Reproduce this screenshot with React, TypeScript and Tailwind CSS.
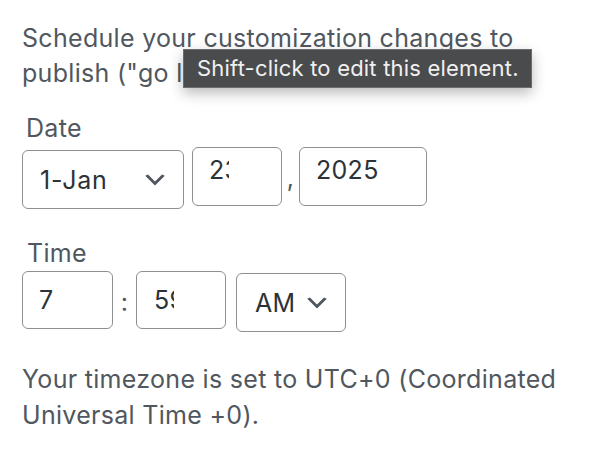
function Chevron() {
  return (
    <svg width="28" height="28" viewBox="0 0 20 20" className="absolute right-[14px] top-1/2 -translate-y-1/2">
      <path d="M5 6l5 5 5-5 2 1-7 7-7-7 2-1z" fill="#50575e" />
    </svg>
  );
}

export default function App() {
  return (
    <div className="relative w-[594px] h-[476px] bg-white overflow-hidden [font-family:Inter,'Noto_Sans',sans-serif] tracking-[0.3px]">
      <div className="pt-[21px] px-[22px]">
        <p className="text-[25px] leading-[34.5px] text-[#50575e]">
          Schedule your customization changes to
          <br />
          publish ("go live") at a future date.
        </p>
      </div>

      <div className="mt-[23px] pl-[26px] text-[25px] leading-[30px] text-[#50575e]">Date</div>

      <div className="mt-[4px] pl-[22px] flex items-start text-[25px] text-[#2c3338]">
        <div className="relative mt-[3px] w-[162px] h-[59px] border-[1.5px] border-[#8c8f94] rounded-[6px] flex items-center pl-[17px] leading-[30px] tracking-[0.8px]">
          1-Jan
          <Chevron />
        </div>
        <div className="ml-[8px] w-[90px] h-[59px] border-[1.5px] border-[#8c8f94] rounded-[6px] pl-[16px] pt-[7px] leading-[30px]">
          <span className="inline-block w-[20px] overflow-hidden whitespace-nowrap align-top">23</span>
        </div>
        <div className="w-[17px] text-center pt-[16px] leading-[30px] text-[#50575e]">,</div>
        <div className="w-[128px] h-[59px] border-[1.5px] border-[#8c8f94] rounded-[6px] pl-[16px] pt-[7px] leading-[30px]">
          2025
        </div>
      </div>

      <div className="mt-[29px] pl-[27px] text-[25px] leading-[30px] text-[#50575e]">Time</div>

      <div className="mt-[3px] pl-[22px] flex items-start text-[25px] text-[#2c3338]">
        <div className="w-[91px] h-[58px] border-[1.5px] border-[#8c8f94] rounded-[6px] flex items-center pl-[16px] leading-[30px]">
          7
        </div>
        <div className="w-[23px] h-[58px] flex items-center justify-center pt-[4px] leading-[30px] text-[#50575e]">:</div>
        <div className="w-[90px] h-[58px] border-[1.5px] border-[#8c8f94] rounded-[6px] flex items-center pl-[17px] leading-[30px]">
          <span className="inline-block w-[20px] overflow-hidden whitespace-nowrap">59</span>
        </div>
        <div className="relative ml-[10px] mt-[2px] w-[110px] h-[59px] border-[1.5px] border-[#8c8f94] rounded-[6px] flex items-center pl-[18px] leading-[30px]">
          AM
          <Chevron />
        </div>
      </div>

      <div className="mt-[29px] px-[22px]">
        <p className="text-[25px] leading-[36px] text-[#50575e]">
          Your timezone is set to UTC+0 (Coordinated
          <br />
          Universal Time +0).
        </p>
      </div>

      <div className="absolute left-[183px] top-[49px] w-[349px] h-[39px] bg-[#4a4b4c] border border-[#6b6c6d] flex items-center pl-[13px] text-[22px] tracking-[0.2px] text-[#f0f0f0] whitespace-nowrap shadow-[0_5px_14px_rgba(0,0,0,0.28)]">
        Shift-click to edit this element.
      </div>
    </div>
  );
}
